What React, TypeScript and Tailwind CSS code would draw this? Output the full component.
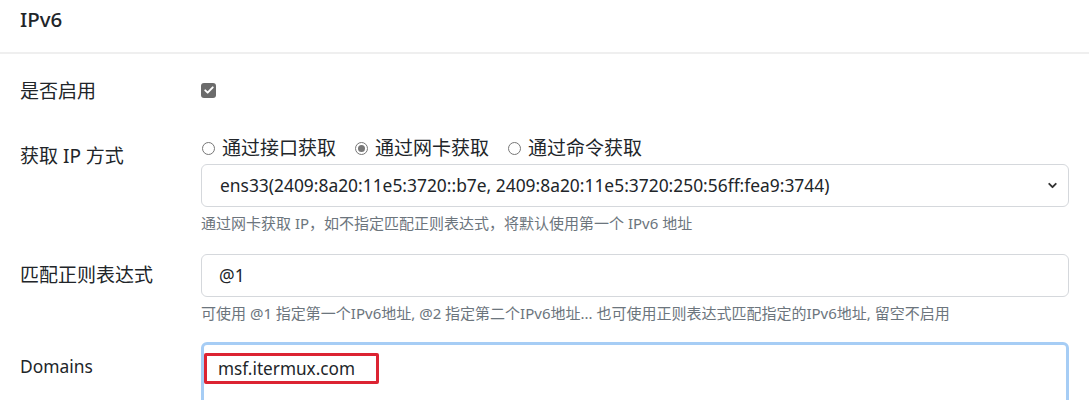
import { ChevronDown } from "lucide-react";

const font = "font-['Noto_Sans','Noto_Sans_CJK_SC',sans-serif]";

function Radio({ label, checked }: { label: string; checked?: boolean }) {
  return (
    <label className="flex items-center gap-[7px]">
      <span className="flex h-[13px] w-[13px] items-center justify-center rounded-full border border-[#777]">
        {checked && <span className="h-[7px] w-[7px] rounded-full bg-[#777]" />}
      </span>
      <span>{label}</span>
    </label>
  );
}

function Help({ children }: { children: string }) {
  return (
    <p className="mt-[6px] text-[15px] leading-[21px] text-[#6c757d]">{children}</p>
  );
}

export default function App() {
  return (
    <div className={`h-[400px] overflow-hidden bg-white text-[19px] text-[#212529] ${font}`}>
      <div className="border-b-2 border-[#efefef] px-5 pt-[5px] pb-[19px] text-[20.5px] leading-[28px] font-medium">
        IPv6
      </div>

      <div className="px-5 pt-[16px]">
        {/* enable */}
        <div className="grid grid-cols-[181px_1fr]">
          <div className="py-[8px] leading-[27px]">是否启用</div>
          <div className="flex h-[43px] items-center">
            <span className="-mt-[3px] flex h-[15px] w-[15px] items-center justify-center rounded-[3px] bg-[#6b6b6b]">
              <svg viewBox="0 0 16 16" className="h-[12px] w-[12px]" fill="none">
                <path d="M3 8.5l3.2 3L13 4.5" stroke="#fff" strokeWidth="2.6" strokeLinecap="round" strokeLinejoin="round" />
              </svg>
            </span>
          </div>
        </div>

        {/* mode */}
        <div className="mt-[22px] grid grid-cols-[181px_1fr]">
          <div className="py-[8px] leading-[27px]">获取 IP 方式</div>
          <div>
            <div className="flex gap-[19px] pl-[1px] leading-[27px]">
              <Radio label="通过接口获取" />
              <Radio label="通过网卡获取" checked />
              <Radio label="通过命令获取" />
            </div>
            <div className="mt-[1.5px] flex h-[43px] items-center justify-between rounded-[6px] border border-[#d5d8dc] pl-[18px] pr-[9px] text-[17.4px] leading-[27px]">
              <span>ens33(2409:8a20:11e5:3720::b7e, 2409:8a20:11e5:3720:250:56ff:fea9:3744)</span>
              <ChevronDown className="h-[13px] w-[13px] text-[#333]" strokeWidth={3.5} />
            </div>
            <Help>通过网卡获取 IP，如不指定匹配正则表达式，将默认使用第一个 IPv6 地址</Help>
          </div>
        </div>

        {/* regex */}
        <div className="mt-[20px] grid grid-cols-[181px_1fr]">
          <div className="py-[8px] leading-[27px]">匹配正则表达式</div>
          <div>
            <div className="flex h-[43px] items-center rounded-[6px] border border-[#d5d8dc] px-[17px] text-[17.4px] leading-[27px]">
              @1
            </div>
            <Help>可使用 @1 指定第一个IPv6地址, @2 指定第二个IPv6地址... 也可使用正则表达式匹配指定的IPv6地址, 留空不启用</Help>
          </div>
        </div>

        {/* domains */}
        <div className="mt-[18px] grid grid-cols-[181px_1fr]">
          <div className="pt-[11px] text-[17.4px] leading-[27px]">Domains</div>
          <div className="h-[120px] rounded-[6px] border-[3px] border-[#a6cdf5] pt-[8px]">
            <span className="inline-block rounded-[2px] border-[3px] border-[#dc2332] pl-[11px] pr-[21px] text-[17.2px] leading-[25px]">
              msf.itermux.com
            </span>
          </div>
        </div>
      </div>
    </div>
  );
}
